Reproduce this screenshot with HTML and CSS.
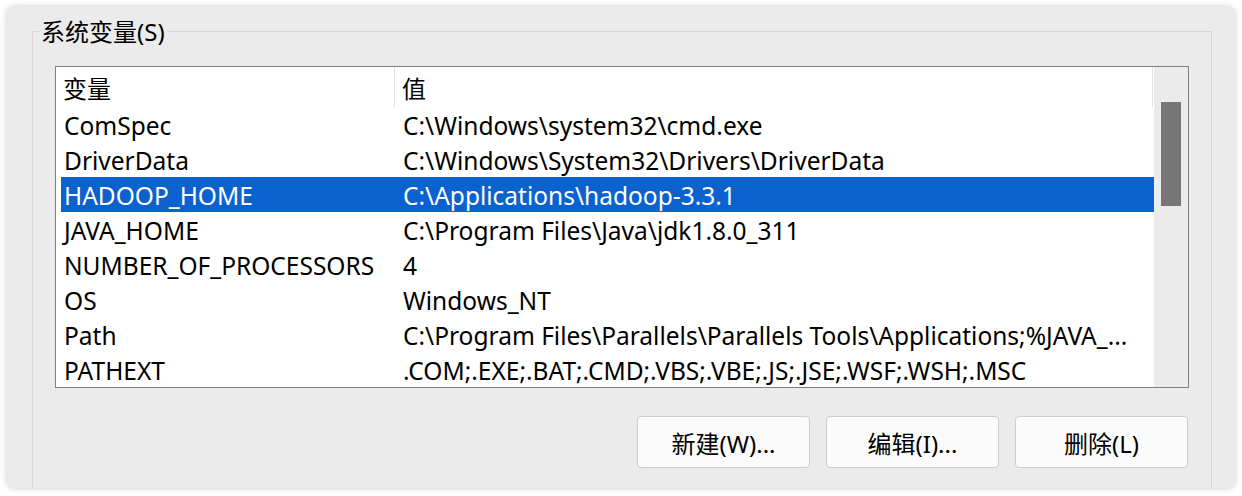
FILE: index.html
```html
<!DOCTYPE html>
<html>
<head>
    <title>系统变量</title>
    <link rel="stylesheet" href="styles.css">
</head>
<body>
    <div class="window">
        <fieldset class="group">
            <legend>系统变量(S)</legend>

            <div class="list">
                <div class="list-body">
                    <div class="list-head">
                        <div class="head-cell name-col">变量</div>
                        <div class="head-cell value-col">值</div>
                    </div>
                    <div class="row"><span>ComSpec</span><span>C:\Windows\system32\cmd.exe</span></div>
                    <div class="row"><span>DriverData</span><span>C:\Windows\System32\Drivers\DriverData</span></div>
                    <div class="row selected"><span>HADOOP_HOME</span><span>C:\Applications\hadoop-3.3.1</span></div>
                    <div class="row"><span>JAVA_HOME</span><span>C:\Program Files\Java\jdk1.8.0_311</span></div>
                    <div class="row"><span>NUMBER_OF_PROCESSORS</span><span>4</span></div>
                    <div class="row"><span>OS</span><span>Windows_NT</span></div>
                    <div class="row"><span>Path</span><span>C:\Program Files\Parallels\Parallels Tools\Applications;%JAVA_...</span></div>
                    <div class="row"><span>PATHEXT</span><span>.COM;.EXE;.BAT;.CMD;.VBS;.VBE;.JS;.JSE;.WSF;.WSH;.MSC</span></div>
                </div>
                <div class="scrollbar">
                    <div class="thumb"></div>
                </div>
            </div>

            <div class="buttons">
                <button type="button">新建(W)...</button>
                <button type="button">编辑(I)...</button>
                <button type="button">删除(L)</button>
            </div>
        </fieldset>
    </div>
</body>
</html>
```

FILE: styles.css
```css
body {
    margin: 0;
    padding: 0;
    background-color: #ffffff;
    font-family: "Noto Sans", "Noto Sans CJK SC", sans-serif;
    font-size: 24px;
    color: #000000;
}

.window {
    margin: 7px;
    width: 1228px;
    height: 481px;
    background-color: #ebebeb;
    border-radius: 8px;
    box-shadow: 0 0 6px rgba(0, 0, 0, 0.22);
    overflow: hidden;
}

.group {
    margin: 8px 0 0 25px;
    width: 1180px;
    padding: 0 0 40px 0;
    border: 1px solid #d6d6d6;
    box-sizing: border-box;
    height: 520px;
}

.group legend {
    margin-left: 6px;
    padding: 2px 2px 0 2px;
    line-height: 30px;
}

.list {
    display: flex;
    margin: 19px 0 0 22px;
    width: 1134px;
    height: 322px;
    box-sizing: border-box;
    border: 1px solid #7c7f86;
    background-color: #ffffff;
}

.list-body {
    flex: 1;
}

.list-head {
    display: flex;
    height: 40px;
}

.head-cell {
    height: 40px;
    line-height: 44px;
    box-sizing: border-box;
    border-right: 1px solid #e3e3e3;
}

.name-col {
    width: 339px;
    padding-left: 7px;
}

.value-col {
    width: 758px;
    padding-left: 7px;
}

.row {
    display: grid;
    grid-template-columns: 339px 1fr;
    margin-left: 5px;
    padding-left: 3px;
    height: 35px;
    line-height: 37px;
    font-size: 24.5px;
    white-space: nowrap;
    overflow: hidden;
}

.row.selected {
    background-color: #0b62cf;
    color: #ffffff;
}

.scrollbar {
    width: 34px;
    background-color: #ebebeb;
    padding: 35px 0 0 7px;
    box-sizing: border-box;
}

.thumb {
    width: 20px;
    height: 104px;
    background-color: #767676;
}

.buttons {
    display: flex;
    justify-content: flex-end;
    gap: 16px;
    width: 1155px;
    margin-top: 28px;
}

.buttons button {
    width: 173px;
    height: 52px;
    font-family: inherit;
    font-size: 24px;
    color: #000000;
    background-color: #fbfbfb;
    border: 1px solid #cdcdcd;
    border-radius: 4px;
    padding: 0;
}
```
